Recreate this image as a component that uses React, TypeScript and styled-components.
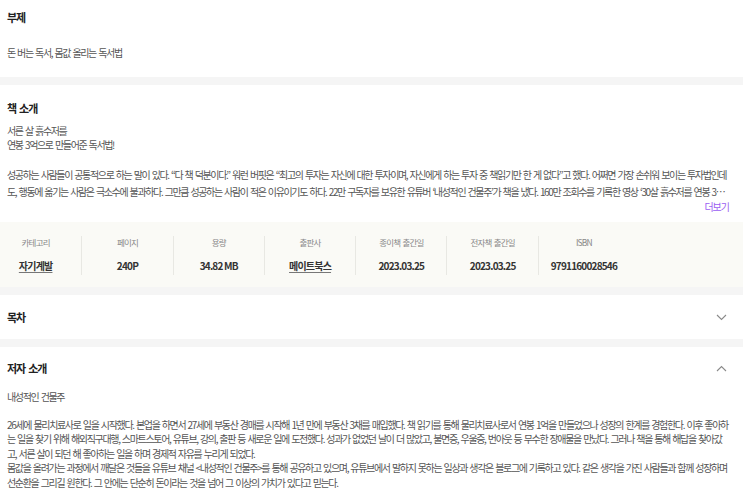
import React from 'react'
import styled, { createGlobalStyle } from 'styled-components'

const GlobalStyle = createGlobalStyle`
  html, body {
    margin: 0;
    padding: 0;
    background: #fff;
  }
  body {
    font-family: 'Noto Sans CJK KR', 'Noto Sans', sans-serif;
    color: #555;
    -webkit-font-smoothing: antialiased;
  }
`

const infoData = [
  { label: '카테고리', value: '자기계발', link: true },
  { label: '페이지', value: '240P', link: false },
  { label: '용량', value: '34.82 MB', link: false },
  { label: '출판사', value: '메이트북스', link: true },
  { label: '종이책 출간일', value: '2023.03.25', link: false },
  { label: '전자책 출간일', value: '2023.03.25', link: false },
  { label: 'ISBN', value: '9791160028546', link: false },
]

const authorLines = [
  '26세에 물리치료사로 일을 시작했다. 본업을 하면서 27세에 부동산 경매를 시작해 1년 만에 부동산 3채를 매입했다. 책 읽기를 통해 물리치료사로서 연봉 1억을 만들었으나 성장의 한계를 경험한다. 이후 좋아하는 일을 찾기 위해 해외직구대행, 스마트스토어, 유튜브, 강의, 출판 등 새로운 일에 도전했다. 성과가 없었던 날이 더 많았고, 불면증, 우울증, 번아웃 등 무수한 장애물을 만났다. 그러나 책을 통해 해답을 찾아갔고, 서른 살이 되던 해 좋아하는 일을 하며 경제적 자유를 누리게 되었다.',
  '몸값을 올려가는 과정에서 깨달은 것들을 유튜브 채널 <내성적인 건물주>를 통해 공유하고 있으며, 유튜브에서 말하지 못하는 일상과 생각은 블로그에 기록하고 있다. 같은 생각을 가진 사람들과 함께 성장하며 선순환을 그리길 원한다. 그 안에는 단순히 돈이라는 것을 넘어 그 이상의 가치가 있다고 믿는다.',
]

const Chevron = ({ up }: { up?: boolean }) => (
  <svg width="11" height="7" viewBox="0 0 11 7" fill="none">
    <polyline
      points={up ? '1,6 5.5,1.5 10,6' : '1,1 5.5,5.5 10,1'}
      stroke="#8a8a8a"
      strokeWidth="1.1"
    />
  </svg>
)

const App = () => {
  return (
    <Page>
      <GlobalStyle />

      <Section>
        <Title>부제</Title>
        <SubText>돈 버는 독서, 몸값 올리는 독서법</SubText>
      </Section>

      <Section divided>
        <Title top={14}>책 소개</Title>
        <Lead>
          서른 살 흙수저를
          <br />
          연봉 3억으로 만들어준 독서법!
        </Lead>
        <Intro>
          성공하는 사람들이 공통적으로 하는 말이 있다. “다 책 덕분이다.” 워런 버핏은 “최고의 투자는 자신에 대한 투자이며, 자신에게 하는 투자 중 책읽기만 한 게 없다”고 했다. 어쩌면 가장 손쉬워 보이는 투자법인데도, 행동에 옮기는 사람은 극소수에 불과하다. 그만큼 성공하는 사람이 적은 이유이기도 하다. 22만 구독자를 보유한 유튜버 ‘내성적인 건물주’가 책을 냈다. 160만 조회수를 기록한 영상 ‘30살 흙수저를 연봉 3억으로 만들어준 독서법’을 바탕으로 책을 읽고 실행하는 법을 담았다.
        </Intro>
        <MoreRow>
          <MoreButton>더보기</MoreButton>
        </MoreRow>
        <InfoBox>
          <InfoGrid>
            {infoData.map(({ label, value, link }) => (
              <InfoCell key={label}>
                <InfoLabel>{label}</InfoLabel>
                <InfoValue link={link}>{value}</InfoValue>
              </InfoCell>
            ))}
          </InfoGrid>
        </InfoBox>
      </Section>

      <Section divided>
        <FoldHeader height={44}>
          <Title flat>목차</Title>
          <Chevron />
        </FoldHeader>
      </Section>

      <Section divided>
        <FoldHeader height={42}>
          <Title flat>저자 소개</Title>
          <Chevron up />
        </FoldHeader>
        <AuthorName>내성적인 건물주</AuthorName>
        <AuthorText>
          {authorLines.map(line => (
            <p key={line.slice(0, 10)}>{line}</p>
          ))}
        </AuthorText>
      </Section>
    </Page>
  )
}

export default App

const Page = styled.div`
  width: 743px;
  min-height: 495px;
  background: #fff;
  overflow: hidden;
`

const Section = styled.section<{ divided?: boolean }>`
  padding: 0 15px 0 7px;
  border-top: ${props => (props.divided ? '8px solid #f5f5f5' : 'none')};
  &:first-child {
    padding-bottom: 17px;
  }
`

const Title = styled.h3<{ top?: number; flat?: boolean }>`
  margin: ${props => (props.flat ? 0 : `${props.top ?? 8}px 0 0`)};
  font-size: 11px;
  line-height: 18px;
  font-weight: 700;
  color: #222;
  letter-spacing: -1px;
  word-spacing: 1.5px;
`

const BodyText = styled.p`
  font-size: 10px;
  letter-spacing: -1.36px;
  word-spacing: 1.4px;
  color: #555;
`

const SubText = styled(BodyText)`
  margin: 20px 0 0;
  line-height: 14px;
`

const Lead = styled(BodyText)`
  margin: 7px 0 0;
  line-height: 14px;
`

const Intro = styled(BodyText)`
  margin: 14px 0 0;
  line-height: 17px;
  display: -webkit-box;
  -webkit-line-clamp: 2;
  -webkit-box-orient: vertical;
  overflow: hidden;
`

const MoreRow = styled.div`
  display: flex;
  justify-content: flex-end;
  margin-right: -1px;
`

const MoreButton = styled.button`
  border: none;
  background: transparent;
  padding: 0;
  font-family: inherit;
  font-size: 10px;
  line-height: 14px;
  letter-spacing: -1px;
  color: #9b5df2;
  cursor: pointer;
`

const InfoBox = styled.div`
  margin: 8px -15px 0 -7px;
  padding: 14px 0 12px;
  background: #fafaf6;
`

const InfoGrid = styled.div`
  display: grid;
  grid-template-columns: repeat(7, 91.3px);
  margin-left: -10px;
`

const InfoCell = styled.div`
  display: flex;
  flex-direction: column;
  align-items: center;
  gap: 11px;
  height: 39px;
  & + & {
    border-left: 1px solid #e8e8e3;
  }
`

const InfoLabel = styled.span`
  font-size: 8.5px;
  line-height: 12px;
  letter-spacing: -0.8px;
  word-spacing: 1px;
  color: #888;
`

const InfoValue = styled.span<{ link?: boolean }>`
  font-size: 10px;
  line-height: 14px;
  font-weight: 700;
  letter-spacing: -0.8px;
  color: #333;
  text-decoration: ${props => (props.link ? 'underline' : 'none')};
  text-decoration-color: #777;
  text-decoration-thickness: 1px;
  text-underline-offset: 2px;
`

const FoldHeader = styled.div<{ height: number }>`
  display: flex;
  align-items: center;
  justify-content: space-between;
  height: ${props => props.height}px;
  padding-right: 1px;
`

const AuthorName = styled(BodyText)`
  margin: 1px 0 0;
  line-height: 14px;
`

const AuthorText = styled.div`
  margin-top: 14px;
  font-size: 10px;
  line-height: 14.4px;
  letter-spacing: -1.33px;
  word-spacing: 1.3px;
  color: #555;
  p {
    margin: 0;
  }
`
